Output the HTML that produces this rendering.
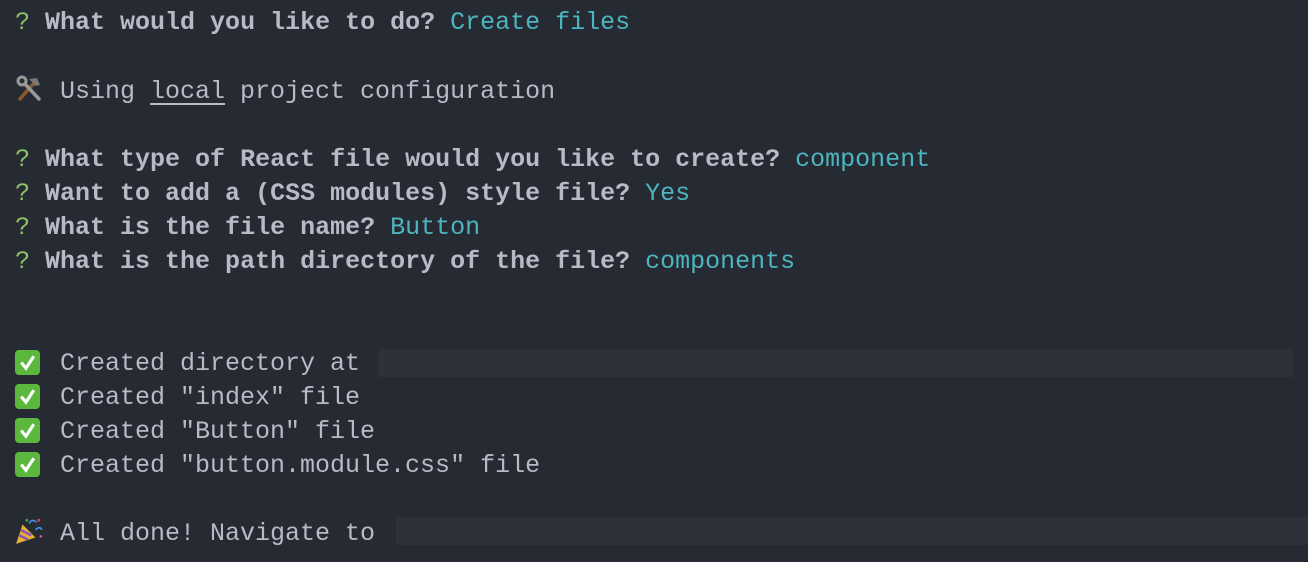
<!DOCTYPE html>
<html><head><style>
body{margin:0;background:#262a33;width:1308px;height:562px;overflow:hidden;position:relative;font-family:"Liberation Mono",monospace;font-size:25px;color:#b6bbc6}
.l{position:absolute;left:15px;height:34px;line-height:34px;white-space:pre}
.q{color:#8cc265}
b{font-weight:bold;color:#b6bbc6}
.c{color:#4db5bf}
.u{text-decoration:underline;text-underline-offset:5px}
.box{position:absolute;background:#2d313a}
.ck{display:inline-block;width:25px;height:25px;background:#5cb83c;border-radius:4px;vertical-align:-5px;position:relative;margin-right:20px}
</style></head><body>
<div class="l" style="top:6px"><span class="q">?</span> <b>What would you like to do?</b> <span class="c">Create files</span></div>
<div class="l" style="top:75px"><svg width="28" height="28" viewBox="0 0 28 28" style="vertical-align:-5px;margin-right:17px"><path d="M5 24 L19 8" stroke="#8b5a2b" stroke-width="3.5" stroke-linecap="round"/><path d="M14 4 L22 3 L25 10 L20 11 L17 7Z" fill="#777"/><path d="M24 24 L10 9" stroke="#999" stroke-width="3.5" stroke-linecap="round"/><circle cx="7" cy="6" r="4" fill="none" stroke="#999" stroke-width="3"/></svg>Using <span class="u">local</span> project configuration</div>
<div class="l" style="top:143px"><span class="q">?</span> <b>What type of React file would you like to create?</b> <span class="c">component</span></div>
<div class="l" style="top:177px"><span class="q">?</span> <b>Want to add a (CSS modules) style file?</b> <span class="c">Yes</span></div>
<div class="l" style="top:211px"><span class="q">?</span> <b>What is the file name?</b> <span class="c">Button</span></div>
<div class="l" style="top:245px"><span class="q">?</span> <b>What is the path directory of the file?</b> <span class="c">components</span></div>
<div class="box" style="left:378px;top:349px;width:915px;height:28px"></div>
<div class="box" style="left:396px;top:517px;width:912px;height:28px"></div>
<div class="l" style="top:347px"><span class="ck"><svg width="25" height="25" viewBox="0 0 24 24" style="position:absolute;left:0;top:0"><path d="M6 12 L10.5 17.5 L18 6" fill="none" stroke="#fff" stroke-width="3"/></svg></span>Created directory at</div>
<div class="l" style="top:381px"><span class="ck"><svg width="25" height="25" viewBox="0 0 24 24" style="position:absolute;left:0;top:0"><path d="M6 12 L10.5 17.5 L18 6" fill="none" stroke="#fff" stroke-width="3"/></svg></span>Created "index" file</div>
<div class="l" style="top:415px"><span class="ck"><svg width="25" height="25" viewBox="0 0 24 24" style="position:absolute;left:0;top:0"><path d="M6 12 L10.5 17.5 L18 6" fill="none" stroke="#fff" stroke-width="3"/></svg></span>Created "Button" file</div>
<div class="l" style="top:449px"><span class="ck"><svg width="25" height="25" viewBox="0 0 24 24" style="position:absolute;left:0;top:0"><path d="M6 12 L10.5 17.5 L18 6" fill="none" stroke="#fff" stroke-width="3"/></svg></span>Created "button.module.css" file</div>
<div class="l" style="top:517px"><svg width="28" height="28" viewBox="0 0 26 26" style="vertical-align:-5px;margin-right:17px"><path d="M1 25 L7 7 L19 19Z" fill="#e8b030"/><path d="M4 17 L12 21 M5.5 12 L15 17" stroke="#8a4fc0" stroke-width="2.2"/><path d="M13 6 Q16 1 20 5 M19 12 Q23 8 25 12" stroke="#3a8ee0" stroke-width="1.6" fill="none"/><circle cx="22" cy="3" r="1.4" fill="#e04040"/><circle cx="11" cy="3" r="1.3" fill="#4a4"/><circle cx="24" cy="18" r="1.2" fill="#e06090"/></svg>All done! Navigate to</div>
</body></html>
